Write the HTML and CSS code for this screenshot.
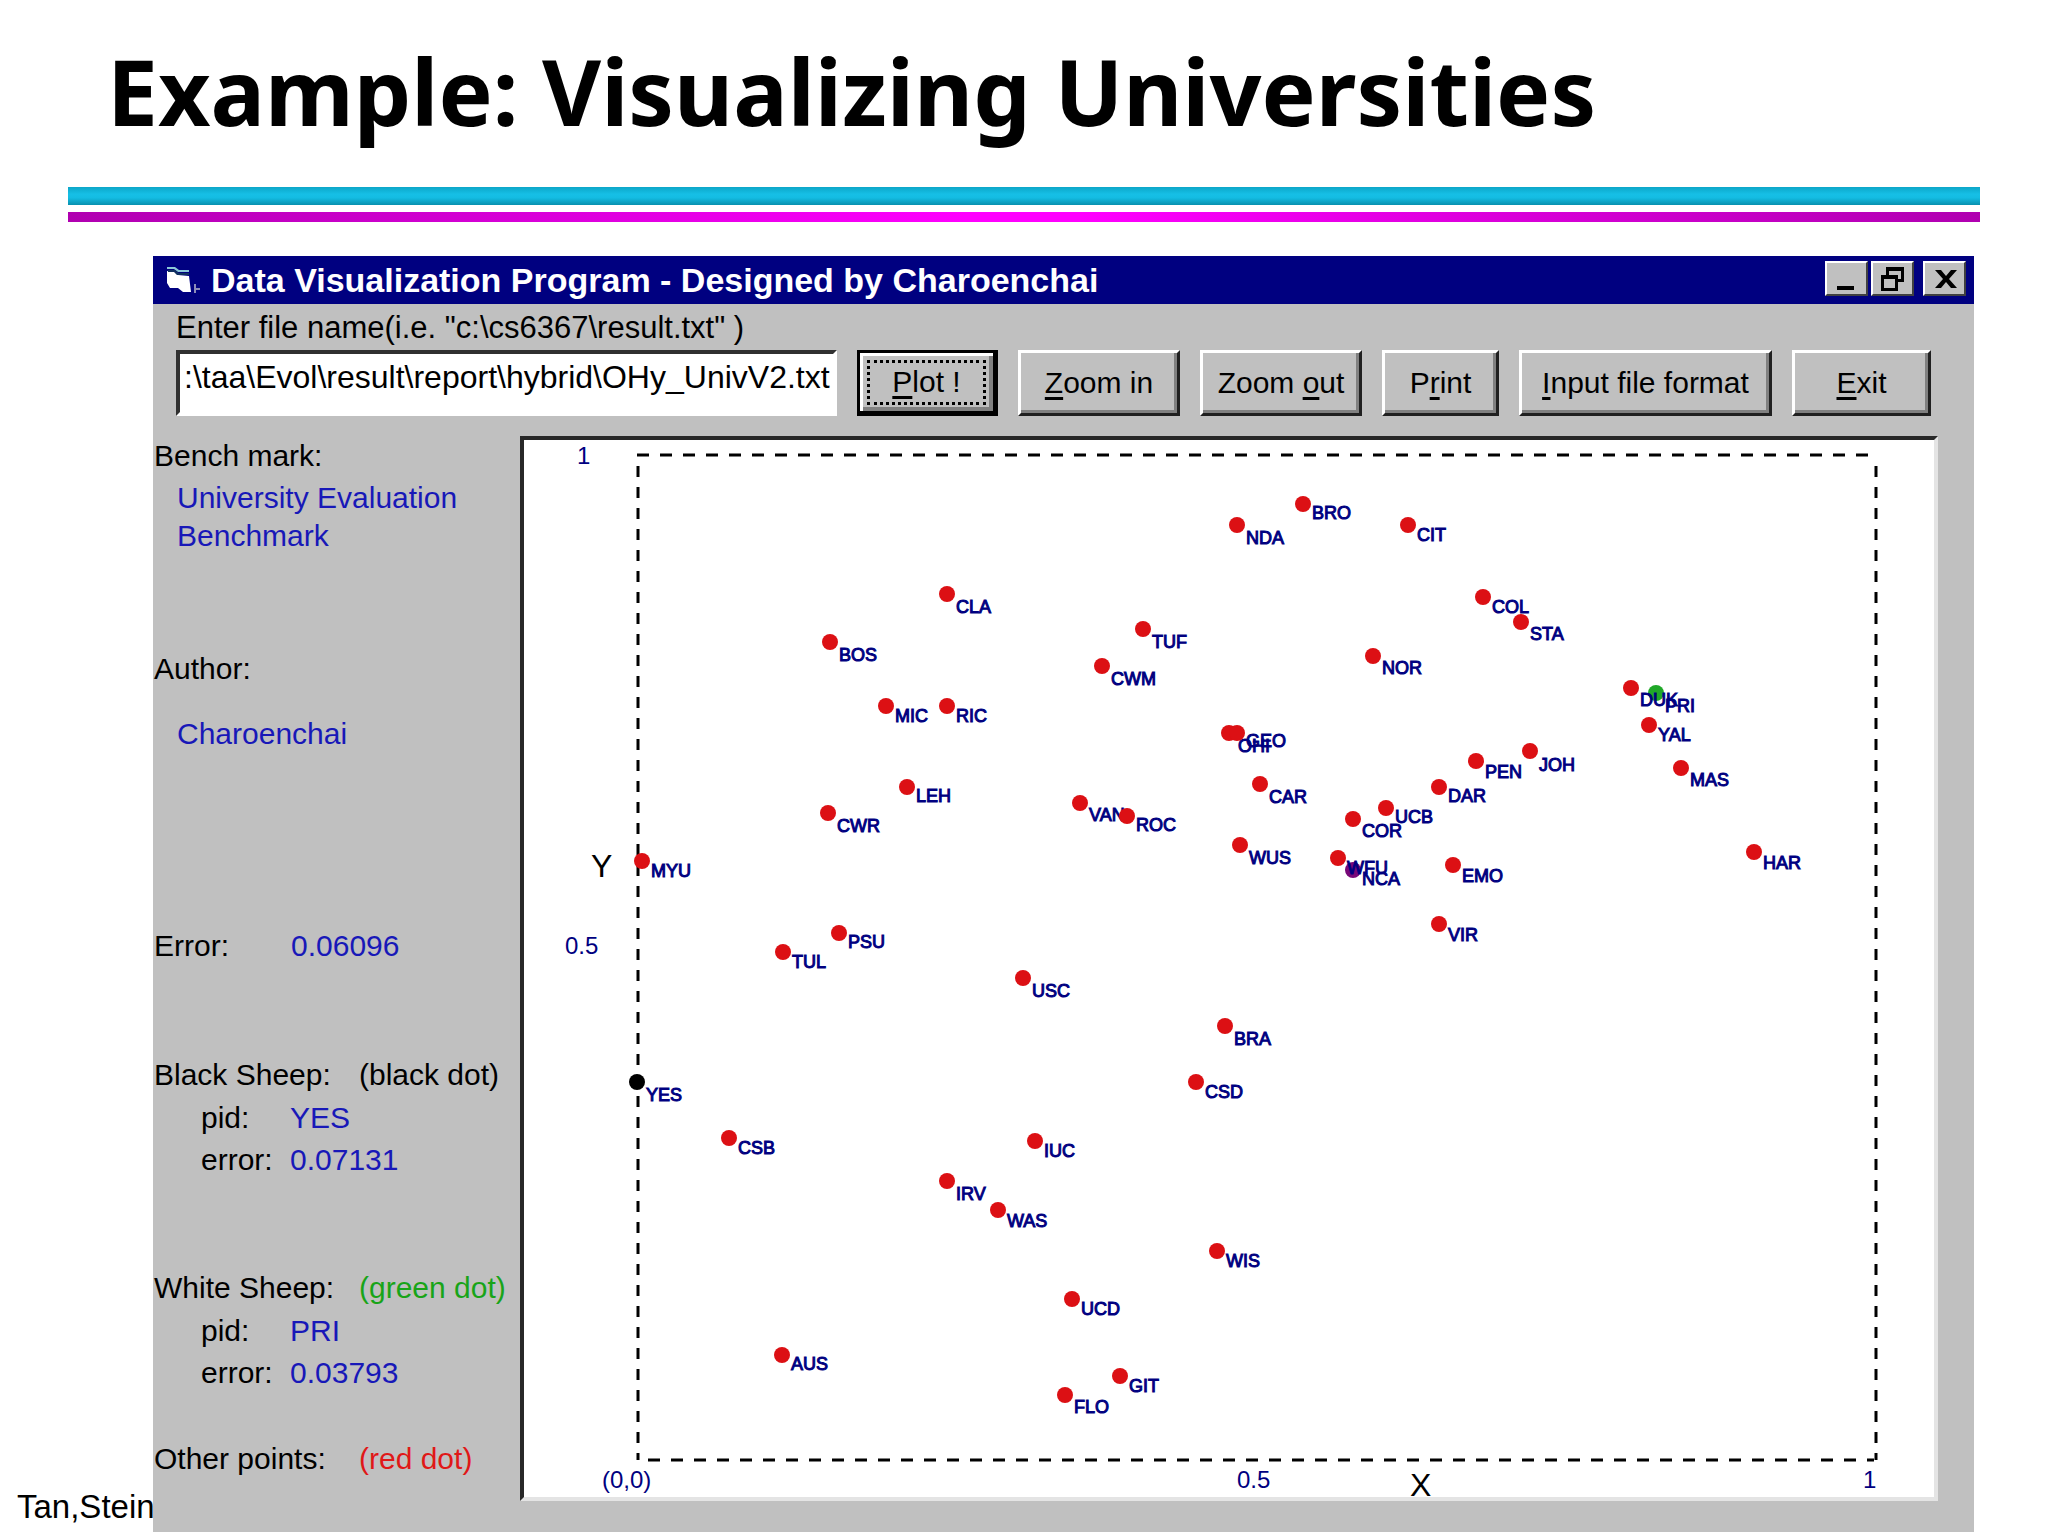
FILE: index.html
```html
<!DOCTYPE html>
<html lang="en">
<head>
    <meta charset="UTF-8">
    <meta name="viewport" content="width=device-width, initial-scale=1.0">
    <title>Example: Visualizing Universities</title>
    <link rel="stylesheet" href="styles.css">
</head>
<body>
    <header class="slide-header">
        <h1 class="slide-title">Example: Visualizing Universities</h1>
        <div class="rule rule-cyan"></div>
        <div class="rule rule-magenta"></div>
    </header>

    <div class="slide-body">
        <footer class="slide-footer">Tan,Stein</footer>

        <main class="window">
            <div class="titlebar">
                <svg class="app-icon" viewBox="0 0 36 28" aria-hidden="true">
                    <path d="M1 5l8 1 3 3 11 1 2 16h-8l-5-4H4L1 17z" fill="#fff"/>
                    <path d="M1 1h8l4 3h10v2H12L8 3H1z" fill="#8cc8d8"/>
                    <path d="M2 4h7l4 3h10v2H11L8 6H2z" fill="#103060"/>
                    <path d="M28 18h2v4h4v2h-4v3h-2z" fill="#8c8cb8"/>
                </svg>
                <h2 class="titlebar-text">Data Visualization Program - Designed by Charoenchai</h2>
                <div class="titlebar-buttons">
                    <button class="tb-btn" aria-label="Minimize">
                        <svg viewBox="0 0 36 28"><path d="M8 21h17v4H8z"/></svg>
                    </button>
                    <button class="tb-btn" aria-label="Restore">
                        <svg viewBox="0 0 36 28"><path fill-rule="evenodd" d="M11 2h18v15h-6v9H6V10h5zM14 6v4h9v4h3V6zM9 14v9h11v-9z"/></svg>
                    </button>
                    <button class="tb-btn tb-close" aria-label="Close">
                        <svg viewBox="0 0 36 28"><path d="M8 5h6l5 6 5-6h6l-8 9 8 9h-6l-5-6-5 6H8l8-9z"/></svg>
                    </button>
                </div>
            </div>

            <form class="toolbar" onsubmit="return false">
                <label class="file-label" for="file">Enter file name(i.e. "c:\cs6367\result.txt" )</label>
                <div class="controls">
                    <input class="file-input" id="file" type="text" value=":\taa\Evol\result\report\hybrid\OHy_UnivV2.txt">
                    <button class="btn btn-default"><span class="focus"><u>P</u>lot !</span></button>
                    <button class="btn btn-zoom" type="button"><span><u>Z</u>oom in</span></button>
                    <button class="btn btn-zoom" type="button"><span>Zoom <u>o</u>ut</span></button>
                    <button class="btn btn-print" type="button"><span>P<u>r</u>int</span></button>
                    <button class="btn btn-format" type="button"><span><u>I</u>nput file format</span></button>
                    <button class="btn btn-exit" type="button"><span><u>E</u>xit</span></button>
                </div>
            </form>

            <div class="content">
                <aside class="sidebar">
                    <section class="info info-benchmark">
                        <h3>Bench mark:</h3>
                        <p class="value">University Evaluation<br>Benchmark</p>
                    </section>
                    <section class="info info-author">
                        <h3>Author:</h3>
                        <p class="value">Charoenchai</p>
                    </section>
                    <section class="info info-error">
                        <h3>Error:</h3>
                        <p class="value">0.06096</p>
                    </section>
                    <section class="info info-black">
                        <div class="legend"><h3>Black Sheep:</h3><span>(black dot)</span></div>
                        <dl>
                            <dt>pid:</dt><dd>YES</dd>
                            <dt>error:</dt><dd>0.07131</dd>
                        </dl>
                    </section>
                    <section class="info info-white">
                        <div class="legend"><h3>White Sheep:</h3><span class="green">(green dot)</span></div>
                        <dl>
                            <dt>pid:</dt><dd>PRI</dd>
                            <dt>error:</dt><dd>0.03793</dd>
                        </dl>
                    </section>
                    <section class="info">
                        <div class="legend"><h3>Other points:</h3><span class="red">(red dot)</span></div>
                    </section>
                </aside>

                <div class="plot">
                    <svg class="chart" viewBox="0 0 1410 1057" role="img" aria-label="Universities plotted on X and Y">
                        <g class="axes">
                            <path d="M113 15H1354M124 1020H1350" stroke-dasharray="12 11"/>
                            <path d="M114 26V1020M1352 26V1020" stroke-dasharray="11 10"/>
                        </g>
                        <g class="ticks">
                            <text x="53" y="24">1</text>
                            <text x="41" y="514">0.5</text>
                            <text x="78" y="1048">(0,0)</text>
                            <text x="713" y="1048">0.5</text>
                            <text x="1339" y="1048">1</text>
                        </g>
                        <g class="axis-names">
                            <text x="67" y="437">Y</text>
                            <text x="886" y="1056">X</text>
                        </g>
                        <g id="points" transform="translate(114 14)"></g>
                    </svg>
                </div>
            </div>
        </main>
    </div>

    <script src="script.js"></script>
</body>
</html>
```
FILE: styles.css
```css
* {
    box-sizing: border-box;
}

body {
    display: flex;
    flex-direction: column;
    min-height: 100vh;
    margin: 0;
    background-color: #fff;
    color: #000;
    font-family: "Liberation Sans", Arial, sans-serif;
    font-size: 30px;
    line-height: 38px;
    overflow-x: hidden;
}

h1, h2, h3, p, dl, dd {
    margin: 0;
    font-size: inherit;
    font-weight: normal;
}

/* slide heading */
.slide-header {
    padding: 28px 68px 0;
}

.slide-title {
    padding-left: 39px;
    margin-bottom: 33px;
    font-family: "Noto Sans", "Open Sans", sans-serif;
    font-size: 91px;
    font-weight: bold;
    line-height: 126px;
    white-space: nowrap;
}

.rule-cyan {
    height: 18px;
    margin-bottom: 7px;
    background: linear-gradient(#0ca6c8, #16bfe6 40%, #14bce2 60%, #0890ae);
}

.rule-magenta {
    height: 10px;
    background: linear-gradient(90deg, #b000b0, #ff00ff 47%, #ff00ff 53%, #b000b0);
}

.slide-body {
    position: relative;
    padding: 34px 74px 3px 153px;
}

/* runs behind the window */
.slide-footer {
    position: absolute;
    left: 17px;
    bottom: 9px;
    font-size: 33px;
    white-space: nowrap;
}

/* program window */
.window {
    position: relative;
    padding-bottom: 31px;
    background-color: #c0c0c0;
}

.titlebar {
    display: flex;
    align-items: center;
    height: 48px;
    padding: 0 8px 0 13px;
    background-color: #000080;
    color: #fff;
}

.app-icon {
    width: 36px;
    height: 28px;
    margin-right: 9px;
}

.titlebar-text {
    flex: 1;
    font-size: 34px;
    font-weight: bold;
    white-space: nowrap;
}

.titlebar-buttons {
    display: flex;
    gap: 3px;
    padding-bottom: 3px;
}

.tb-btn {
    width: 43px;
    height: 35px;
    padding: 0;
    border: 2px solid;
    border-color: #fff #404040 #404040 #fff;
    background-color: #c0c0c0;
    line-height: 0;
}

.tb-btn svg {
    width: 36px;
    height: 28px;
}

.tb-close {
    margin-left: 6px;
}

.toolbar {
    display: flex;
    flex-direction: column;
    gap: 3px;
    padding: 5px 43px 20px 23px;
}

.file-label {
    font-size: 31px;
}

.controls {
    display: flex;
    gap: 20px;
    height: 66px;
}

.file-input {
    flex: 1;
    min-width: 0;
    padding: 0 0 12px 4px;
    border: 4px solid;
    border-color: #303030 #fff #fff #303030;
    border-radius: 0;
    background-color: #fff;
    font: inherit;
    font-size: 32px;
}

.btn {
    padding: 0;
    border: 3px solid;
    border-color: #fff #202020 #202020 #fff;
    background-color: #c0c0c0;
    box-shadow: inset -3px -3px #808080;
    color: #000;
    font: inherit;
    white-space: nowrap;
}

.btn u {
    text-underline-offset: 4px;
    text-decoration-thickness: 3px;
}

.btn-default {
    width: 141px;
    padding: 4px;
    border-color: #000;
    border-width: 3px 5px 5px 3px;
    box-shadow: inset 3px 3px #fff, inset -4px -4px #808080;
}

.focus {
    display: flex;
    align-items: center;
    justify-content: center;
    height: 45px;
    margin: 0 3px;
    border: 3px dotted #000;
    white-space: pre;
}

.btn-zoom {
    width: 162px;
}

.btn-print {
    width: 117px;
}

.btn-format {
    width: 253px;
}

.btn-exit {
    width: 139px;
}

.content {
    display: flex;
    padding-right: 36px;
}

/* left column */
.sidebar {
    width: 367px;
    flex: none;
    padding: 1px 0 0 1px;
    white-space: nowrap;
}

.value,
dd {
    color: #1818b8;
}

.info .value {
    padding-left: 23px;
}

.info-benchmark {
    height: 213px;
}

.info-benchmark .value {
    padding-top: 4px;
}

.info-author {
    height: 277px;
}

.info-author .value {
    padding-top: 27px;
}

.info-error {
    display: flex;
    height: 129px;
}

.info-error h3 {
    width: 114px;
}

.info-black {
    height: 213px;
}

.info-white {
    height: 171px;
}

.legend {
    display: flex;
}

.legend h3 {
    width: 205px;
}

.info dl {
    display: grid;
    grid-template-columns: 89px 1fr;
    gap: 4px 0;
    padding: 5px 0 0 47px;
}

.green {
    color: #18a418;
}

.red {
    color: #e01818;
}

/* scatter plot */
.plot {
    flex: 1;
    border: 4px solid;
    border-color: #282828 #e4e4e4 #e4e4e4 #282828;
    background-color: #fff;
}

.chart {
    display: block;
    width: 100%;
    overflow: visible;
}

.axes path {
    fill: none;
    stroke: #000;
    stroke-width: 3px;
}

.ticks {
    fill: #000080;
    font-size: 24px;
}

.axis-names {
    font-size: 32px;
}

.point text {
    fill: #000080;
    font-size: 18px;
    stroke: #000080;
    stroke-width: 1px;
}

.dot-red {
    fill: #dc1014;
}

.dot-green {
    fill: #20a828;
}

.dot-purple {
    fill: #780878;
}
```
FILE: script.js
```js
// name, dot x, dot y, label baseline, colour
const points = [
    ['NDA', 599, 71, 90],
    ['BRO', 665, 50, 65],
    ['CIT', 770, 71, 87],
    ['CLA', 309, 140, 159],
    ['BOS', 192, 188, 207],
    ['TUF', 505, 175, 194],
    ['CWM', 464, 212, 231],
    ['MIC', 248, 252, 268],
    ['RIC', 309, 252, 268],
    ['COL', 845, 143, 159],
    ['STA', 883, 168, 186],
    ['NOR', 735, 202, 220],
    ['PRI', 1018, 239, 258, 'green'],
    ['DUK', 993, 234, 252],
    ['YAL', 1011, 271, 287],
    ['OHI', 591, 279, 298],
    ['GEO', 599, 279, 293],
    ['CAR', 622, 330, 349],
    ['LEH', 269, 333, 348],
    ['CWR', 190, 359, 378],
    ['VAN', 442, 349, 367],
    ['ROC', 489, 362, 377],
    ['WUS', 602, 391, 410],
    ['MYU', 4, 407, 423],
    ['JOH', 892, 297, 317],
    ['PEN', 838, 307, 324],
    ['DAR', 801, 333, 348],
    ['MAS', 1043, 314, 332],
    ['UCB', 748, 354, 369],
    ['COR', 715, 365, 383],
    ['NCA', 715, 416, 431, 'purple'],
    ['WFU', 700, 404, 420],
    ['EMO', 815, 411, 428],
    ['VIR', 801, 470, 487],
    ['HAR', 1116, 398, 415],
    ['PSU', 201, 479, 494],
    ['TUL', 145, 498, 514],
    ['USC', 385, 524, 543],
    ['BRA', 587, 572, 591],
    ['YES', -1, 628, 647, 'black'],
    ['CSD', 558, 628, 644],
    ['CSB', 91, 684, 700],
    ['IUC', 397, 687, 703],
    ['IRV', 309, 727, 746],
    ['WAS', 360, 756, 773],
    ['WIS', 579, 797, 813],
    ['UCD', 434, 845, 861],
    ['AUS', 144, 901, 916],
    ['GIT', 482, 922, 938],
    ['FLO', 427, 941, 959]
];

document.getElementById('points').innerHTML = points.map(([name, x, y, base, color = 'red']) =>
    `<g class="point">
        <circle class="dot-${color}" cx="${x}" cy="${y}" r="8"/>
        <text x="${x + 9}" y="${base}">${name}</text>
    </g>`
).join('');
```
